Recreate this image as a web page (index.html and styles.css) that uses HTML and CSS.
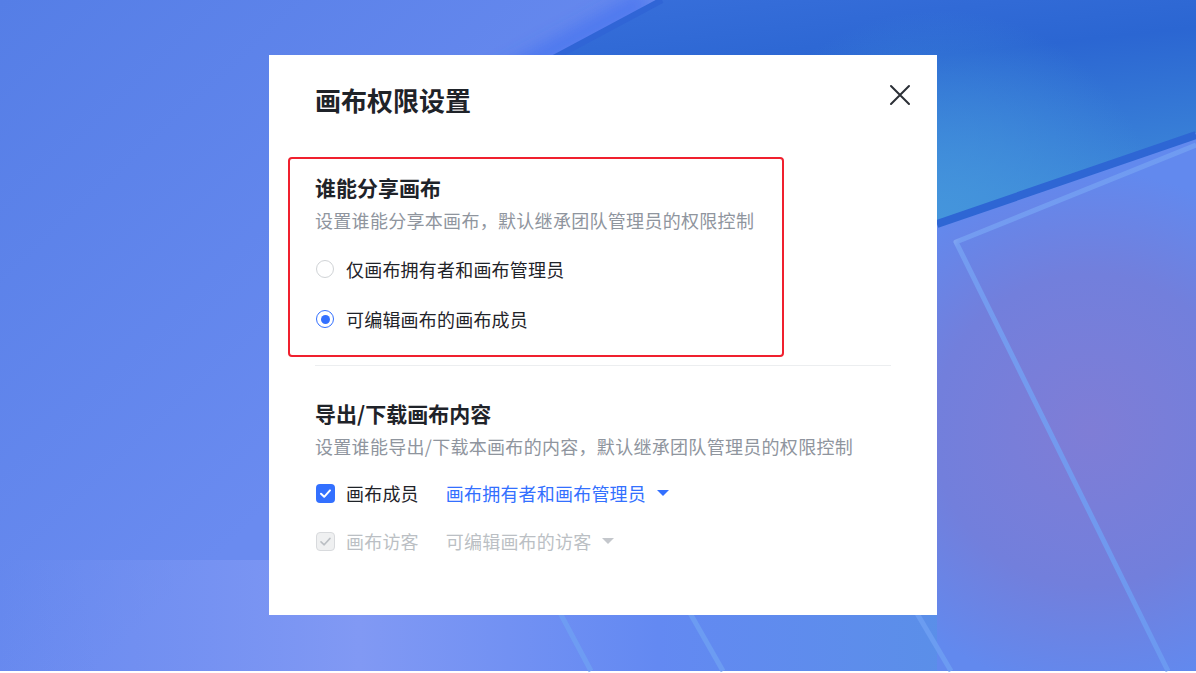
FILE: index.html
```html
<!DOCTYPE html>
<html lang="zh-CN">
<head>
    <meta charset="UTF-8">
    <title>画布权限设置</title>
    <link rel="stylesheet" href="styles.css">
</head>
<body>
    <!-- decorative wallpaper behind the dialog -->
    <svg class="backdrop" viewBox="0 0 1196 673" preserveAspectRatio="none" aria-hidden="true">
        <defs>
            <linearGradient id="bg-base" x1="0" y1="0" x2="1" y2="0.6">
                <stop offset="0" stop-color="#557ee6"/>
                <stop offset="0.5" stop-color="#6a8bf0"/>
                <stop offset="1" stop-color="#6a8af0"/>
            </linearGradient>
            <linearGradient id="bg-low" x1="0" y1="0" x2="1" y2="0">
                <stop offset="0" stop-color="#7a94f2" stop-opacity="0"/>
                <stop offset="0.3" stop-color="#8199f4"/>
                <stop offset="0.55" stop-color="#6389f2"/>
                <stop offset="0.8" stop-color="#5a8fe8"/>
                <stop offset="1" stop-color="#5e86ee"/>
            </linearGradient>
            <linearGradient id="bg-dark" x1="0" y1="0" x2="0.4" y2="1">
                <stop offset="0" stop-color="#3a70dc"/>
                <stop offset="0.45" stop-color="#2b66d2"/>
                <stop offset="1" stop-color="#3c86d8"/>
            </linearGradient>
            <radialGradient id="bg-cyan" cx="940" cy="230" r="220" gradientUnits="userSpaceOnUse">
                <stop offset="0" stop-color="#4596dc"/>
                <stop offset="1" stop-color="#4596dc" stop-opacity="0"/>
            </radialGradient>
            <radialGradient id="bg-purple" cx="1090" cy="430" r="260" gradientUnits="userSpaceOnUse">
                <stop offset="0" stop-color="#7f7dd6"/>
                <stop offset="0.6" stop-color="#727fdc"/>
                <stop offset="1" stop-color="#6289ee"/>
            </radialGradient>
            <linearGradient id="rim" x1="0" y1="0" x2="1" y2="1">
                <stop offset="0" stop-color="#dfe8ff"/>
                <stop offset="0.1" stop-color="#76a0f2"/>
                <stop offset="1" stop-color="#6c9cf2"/>
            </linearGradient>
            <filter id="soft" x="-50%" y="-50%" width="200%" height="200%">
                <feGaussianBlur stdDeviation="8"/>
            </filter>
        </defs>
        <rect width="1196" height="671" fill="url(#bg-base)"/>
        <rect y="560" width="1196" height="111" fill="url(#bg-low)"/>
        <line x1="645" y1="0" x2="385" y2="139" stroke="#3d6cf0" stroke-width="18" stroke-opacity="0.6" filter="url(#soft)"/>
        <polygon points="660,0 1196,0 1196,133 937,222 400,139" fill="url(#bg-dark)"/>
        <polygon points="660,0 1196,0 1196,133 937,222 400,139" fill="url(#bg-cyan)"/>
        <line x1="662" y1="0" x2="402" y2="139" stroke="#3065d6" stroke-width="6"/>
        <polygon points="937,222 1196,133 1196,671 937,671" fill="url(#bg-purple)"/>
        <line x1="937" y1="224" x2="1196" y2="135" stroke="#2e66d4" stroke-width="8"/>
        <polyline points="1196,145 956,242 1168,671" fill="none" stroke="url(#rim)" stroke-width="5" stroke-linejoin="round" stroke-opacity="0.85"/>
        <g stroke="#6fa0f2" stroke-width="5" stroke-opacity="0.8">
            <line x1="500" y1="500" x2="591" y2="671"/>
            <line x1="620" y1="490" x2="723" y2="671"/>
            <line x1="850" y1="500" x2="951" y2="671"/>
        </g>
    </svg>

    <div class="stage">
        <div class="dialog">
            <div class="dialog-header">
                <h1 class="dialog-title">画布权限设置</h1>
                <button class="close-btn" aria-label="关闭">
                    <svg width="22" height="22" viewBox="0 0 22 22">
                        <path d="M2 2 L20 20 M20 2 L2 20" stroke="#2b2f36" stroke-width="2" stroke-linecap="round"/>
                    </svg>
                </button>
            </div>

            <section class="perm-section highlighted">
                <h2 class="section-title">谁能分享画布</h2>
                <p class="section-desc">设置谁能分享本画布，默认继承团队管理员的权限控制</p>
                <div class="options">
                    <label class="option">
                        <span class="radio"></span>
                        <span class="option-text">仅画布拥有者和画布管理员</span>
                    </label>
                    <label class="option">
                        <span class="radio checked"></span>
                        <span class="option-text">可编辑画布的画布成员</span>
                    </label>
                </div>
            </section>

            <div class="divider"></div>

            <section class="perm-section">
                <h2 class="section-title">导出/下载画布内容</h2>
                <p class="section-desc">设置谁能导出/下载本画布的内容，默认继承团队管理员的权限控制</p>
                <div class="options tight">
                    <div class="option">
                        <span class="checkbox checked">
                            <svg width="13" height="13" viewBox="0 0 13 13"><path d="M2 6.8 L5.2 9.8 L11 3.4" fill="none" stroke="#fff" stroke-width="2" stroke-linecap="round" stroke-linejoin="round"/></svg>
                        </span>
                        <span class="option-text">画布成员</span>
                        <span class="select-value">画布拥有者和画布管理员<span class="caret"></span></span>
                    </div>
                    <div class="option disabled">
                        <span class="checkbox checked">
                            <svg width="13" height="13" viewBox="0 0 13 13"><path d="M2 6.8 L5.2 9.8 L11 3.4" fill="none" stroke="#bbbfc4" stroke-width="1.6" stroke-linecap="round" stroke-linejoin="round"/></svg>
                        </span>
                        <span class="option-text">画布访客</span>
                        <span class="select-value">可编辑画布的访客<span class="caret"></span></span>
                    </div>
                </div>
            </section>
        </div>
    </div>
</body>
</html>
```

FILE: styles.css
```css
html, body {
    margin: 0;
    padding: 0;
}
body {
    width: 1196px;
    height: 673px;
    overflow: hidden;
    background-color: #fff;
    font-family: 'Noto Sans CJK SC', 'Noto Sans', sans-serif;
    color: #1f2329;
    position: relative;
}
.backdrop {
    position: absolute;
    left: 0;
    top: 0;
    width: 1196px;
    height: 673px;
    z-index: 0;
}
.stage {
    position: relative;
    z-index: 1;
    padding: 55px 0 0 269px;
}
.dialog {
    width: 668px;
    height: 560px;
    box-sizing: border-box;
    background-color: #fff;
    padding: 27px 46px 0 46px;
}
.dialog-header {
    display: flex;
    align-items: center;
    justify-content: space-between;
    height: 36px;
}
.dialog-title {
    margin: 0;
    font-size: 26px;
    line-height: 36px;
    font-weight: 700;
    color: #1f2329;
}
.close-btn {
    width: 22px;
    height: 22px;
    padding: 0;
    border: none;
    background: none;
    margin-right: -20px;
    margin-top: -10px;
    cursor: pointer;
    display: flex;
}
.perm-section {
    display: flex;
    flex-direction: column;
}
.perm-section.highlighted {
    margin: 39px 0 0 -27px;
    width: 496px;
    box-sizing: border-box;
    border: 2px solid #f0202e;
    border-radius: 4px;
    padding: 14px 25px 21px 25px;
}
.section-title {
    margin: 0;
    font-size: 21px;
    line-height: 28px;
    font-weight: 700;
    color: #1f2329;
}
.section-desc {
    margin: 6px 0 0 0;
    font-size: 18px;
    line-height: 26px;
    letter-spacing: 0.3px;
    color: #8f959e;
}
.options {
    display: flex;
    flex-direction: column;
    gap: 20px;
    margin-top: 21px;
}
.options.tight {
    gap: 18px;
    margin-top: 19px;
}
.option {
    display: flex;
    align-items: center;
    height: 30px;
    font-size: 18px;
    letter-spacing: 0.2px;
    color: #1f2329;
}
.radio {
    width: 18px;
    height: 18px;
    box-sizing: border-box;
    border: 1px solid #d0d3d6;
    border-radius: 50%;
    margin: 0 12px 0 1px;
    display: flex;
    align-items: center;
    justify-content: center;
}
.radio.checked {
    border: 1.5px solid #3370ff;
}
.radio.checked::after {
    content: '';
    width: 9px;
    height: 9px;
    border-radius: 50%;
    background-color: #3370ff;
}
.divider {
    height: 1px;
    background-color: #eceef0;
    margin: 8px 0 33px 0;
}
.checkbox {
    width: 19px;
    height: 19px;
    box-sizing: border-box;
    border-radius: 4px;
    background-color: #3370ff;
    margin: 0 11px 0 1px;
    display: flex;
    align-items: center;
    justify-content: center;
}
.select-value {
    margin-left: 27px;
    color: #3370ff;
    display: flex;
    align-items: center;
}
.caret {
    width: 0;
    height: 0;
    border-left: 6px solid transparent;
    border-right: 6px solid transparent;
    border-top: 6px solid #3370ff;
    margin-left: 11px;
}
.option.disabled {
    color: #bbbfc4;
}
.option.disabled .checkbox {
    background-color: #eff0f1;
    border: 1px solid #d8dadd;
}
.option.disabled .select-value {
    color: #bbbfc4;
}
.option.disabled .caret {
    border-top-color: #c4c7cc;
}
```
